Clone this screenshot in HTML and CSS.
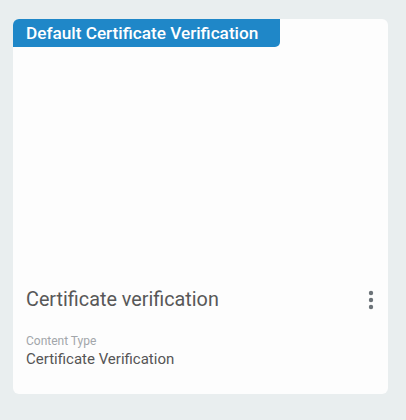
FILE: index.html
```html
<!DOCTYPE html>
<html lang="en">
<head>
  <meta charset="UTF-8" />
  <title>Certificate verification</title>
  <link rel="stylesheet" href="styles.css">
</head>
<body>
  <div class="card">
    <div class="banner">Default Certificate Verification</div>
    <div class="preview"></div>
    <div class="card-body">
      <div class="title-row">
        <span class="title">Certificate verification</span>
        <button class="menu" aria-label="More">
          <svg width="6" height="20" viewBox="0 0 6 20">
            <circle cx="3" cy="3" r="2.2" fill="#6c7378" />
            <circle cx="3" cy="10" r="2.2" fill="#6c7378" />
            <circle cx="3" cy="17" r="2.2" fill="#6c7378" />
          </svg>
        </button>
      </div>
      <div class="meta">
        <div class="meta-label">Content Type</div>
        <div class="meta-value">Certificate Verification</div>
      </div>
    </div>
  </div>
</body>
</html>
```

FILE: styles.css
```css
body {
  font-family: Roboto, 'Liberation Sans', sans-serif;
  background: #e9eeef;
  margin: 0;
  padding: 19px 18px 0 13px;
}
.card {
  background: #fdfdfd;
  border-radius: 6px;
  height: 375px;
  display: flex;
  flex-direction: column;
  overflow: hidden;
}
.banner {
  align-self: flex-start;
  background: #1f87c8;
  color: #fff;
  font-size: 17.2px;
  font-weight: 500;
  line-height: 28px;
  padding: 0 22px 0 13px;
  border-radius: 0 0 5px 0;
}
.preview {
  flex: 1;
}
.card-body {
  padding: 0 14px 25px 13px;
}
.title-row {
  display: flex;
  align-items: center;
  justify-content: space-between;
}
.title {
  font-size: 19.8px;
  color: #585858;
  line-height: 26px;
}
.menu {
  border: none;
  background: none;
  padding: 0;
  display: flex;
  cursor: pointer;
}
.meta {
  margin-top: 20px;
}
.meta-label {
  font-size: 12px;
  color: #a2a6aa;
  line-height: 16px;
}
.meta-value {
  font-size: 15px;
  color: #555;
  line-height: 20px;
}
```
